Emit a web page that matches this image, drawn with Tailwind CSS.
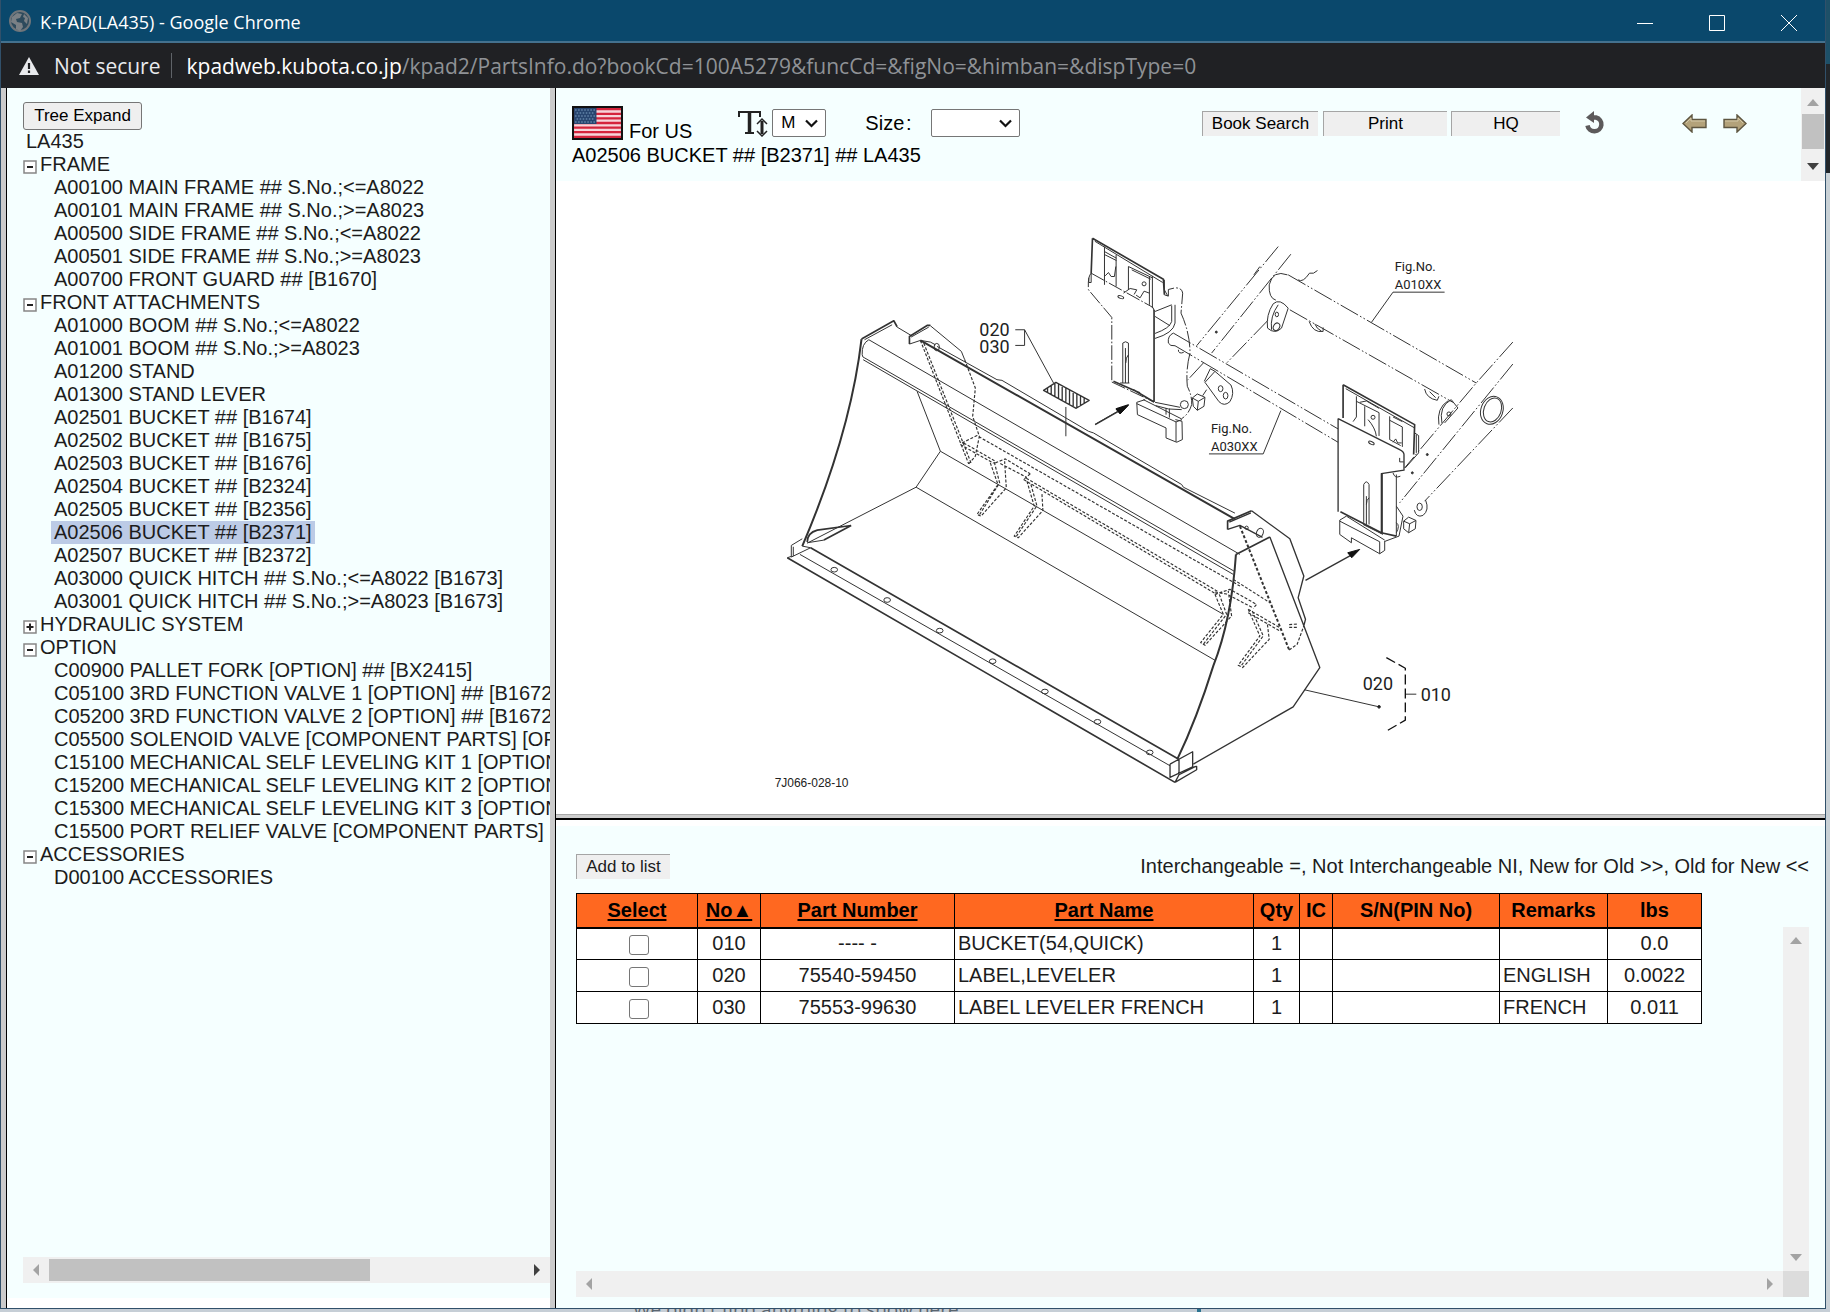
<!DOCTYPE html>
<html lang="en">
<head>
<meta charset="utf-8">
<title>K-PAD(LA435)</title>
<script src="https://cdn.jsdelivr.net/npm/@tailwindcss/browser@4"></script>
</head>
<body class="h-screen overflow-hidden bg-[#c6ced6] flex flex-col font-['Liberation_Sans',Arial,sans-serif] text-[20px] leading-[23px] text-[#1c1c1c]">
<div class="flex-1 min-h-0 flex">
<div class="flex-1 min-w-0 flex flex-col border-l border-r border-b border-[#31506a]">

  <header class="h-[43px] shrink-0 flex items-center bg-[#0a486c] border-b-2 border-[#44718e] text-white font-['Open_Sans',sans-serif]">
    <svg class="ml-[7px] size-6" viewBox="0 0 24 24"><circle cx="12" cy="12" r="10" fill="#2d4a5c" stroke="#6f757a" stroke-width="2"/><path d="M4 8l5-4 5 1-2 4-4 1 1 3 5 1 1 4-3 4-4-2 0-4-5-3zM16 5l4 4-1 6-3-3 1-3-2-1z" fill="#7a8085"/></svg>
    <h1 class="ml-[8px] mt-[2px] text-[18px] leading-6">K-PAD(LA435) - Google Chrome</h1>
    <div class="ml-auto mt-1 flex">
      <button class="w-[72px] h-10 flex items-center justify-center" aria-label="Minimize"><svg class="size-4" viewBox="0 0 16 16" stroke="#fff" fill="none"><path d="M0 8.500h16"/></svg></button>
      <button class="w-[72px] h-10 flex items-center justify-center" aria-label="Maximize"><svg class="size-4" viewBox="0 0 16 16" stroke="#fff" fill="none"><path d="M.5.500h15v15H.5z"/></svg></button>
      <button class="w-[72px] h-10 flex items-center justify-center" aria-label="Close"><svg class="size-4" viewBox="0 0 16 16" stroke="#fff" fill="none"><path d="M0 0l16 16M16 0L0 16"/></svg></button>
    </div>
  </header>

  <div class="h-[45px] shrink-0 flex items-center bg-[#202124] text-[#e8eaed] font-['Open_Sans',sans-serif] text-[21px] leading-7">
    <svg class="ml-[18px] w-5 h-[18px]" viewBox="0 0 20 18"><path d="M10 0L20 18H0z" fill="#e8eaed"/><path d="M10 6v6M10 13.500v2.500" stroke="#202124" stroke-width="2.200"/></svg>
    <span class="ml-[15px]">Not secure</span>
    <span class="ml-[10px] w-px h-[25px] bg-[#5f6368]"></span>
    <span class="ml-[15px] whitespace-nowrap text-[#8f9296]"><span class="text-white">kpadweb.kubota.co.jp</span>/kpad2/PartsInfo.do?bookCd=100A5279&amp;funcCd=&amp;figNo=&amp;himban=&amp;dispType=0</span>
  </div>

  <div class="flex-1 min-h-0 flex">
    <nav class="w-[554px] shrink-0 flex flex-col bg-[#f5ffff] border-l-[5px] border-r-[5px] border-[#cbcbcb] overflow-hidden">
      <div class="flex-1 min-h-0 border-l border-black pl-4 pt-[14px] overflow-hidden whitespace-nowrap">
        <button class="block w-[119px] h-7 bg-[#efefef] border border-[#767676] rounded-[3px] text-[17px] leading-5 text-black">Tree Expand</button>
        <div class="pl-[3px]">LA435</div>
        <ul>
          <li><div class="flex items-center gap-[3px]"><svg class="size-[14px] mt-1" viewBox="0 0 14 14" fill="none"><path d="M1 1h12v12H1z" fill="#fff" stroke="#868686" stroke-width="1.500"/><path d="M4 7h6" stroke="#222" stroke-width="2"/></svg>FRAME</div>
            <ul class="pl-[31px]"><li>A00100 MAIN FRAME ## S.No.;&lt;=A8022</li><li>A00101 MAIN FRAME ## S.No.;&gt;=A8023</li><li>A00500 SIDE FRAME ## S.No.;&lt;=A8022</li><li>A00501 SIDE FRAME ## S.No.;&gt;=A8023</li><li>A00700 FRONT GUARD ## [B1670]</li></ul></li>
          <li><div class="flex items-center gap-[3px]"><svg class="size-[14px] mt-1" viewBox="0 0 14 14" fill="none"><path d="M1 1h12v12H1z" fill="#fff" stroke="#868686" stroke-width="1.500"/><path d="M4 7h6" stroke="#222" stroke-width="2"/></svg>FRONT ATTACHMENTS</div>
            <ul class="pl-[31px]"><li>A01000 BOOM ## S.No.;&lt;=A8022</li><li>A01001 BOOM ## S.No.;&gt;=A8023</li><li>A01200 STAND</li><li>A01300 STAND LEVER</li><li>A02501 BUCKET ## [B1674]</li><li>A02502 BUCKET ## [B1675]</li><li>A02503 BUCKET ## [B1676]</li><li>A02504 BUCKET ## [B2324]</li><li>A02505 BUCKET ## [B2356]</li><li><span class="inline-block h-[23px] align-top -mx-[3px] px-[3px] bg-[#bccbe6]">A02506 BUCKET ## [B2371]</span></li><li>A02507 BUCKET ## [B2372]</li><li>A03000 QUICK HITCH ## S.No.;&lt;=A8022 [B1673]</li><li>A03001 QUICK HITCH ## S.No.;&gt;=A8023 [B1673]</li></ul></li>
          <li><div class="flex items-center gap-[3px]"><svg class="size-[14px] mt-1" viewBox="0 0 14 14" fill="none"><path d="M1 1h12v12H1z" fill="#fff" stroke="#868686" stroke-width="1.500"/><path d="M3.500 7h7M7 3.500v7" stroke="#222" stroke-width="2"/></svg>HYDRAULIC SYSTEM</div></li>
          <li><div class="flex items-center gap-[3px]"><svg class="size-[14px] mt-1" viewBox="0 0 14 14" fill="none"><path d="M1 1h12v12H1z" fill="#fff" stroke="#868686" stroke-width="1.500"/><path d="M4 7h6" stroke="#222" stroke-width="2"/></svg>OPTION</div>
            <ul class="pl-[31px]"><li>C00900 PALLET FORK [OPTION] ## [BX2415]</li><li>C05100 3RD FUNCTION VALVE 1 [OPTION] ## [B1672]</li><li>C05200 3RD FUNCTION VALVE 2 [OPTION] ## [B1672]</li><li>C05500 SOLENOID VALVE [COMPONENT PARTS] [OPTION]</li><li>C15100 MECHANICAL SELF LEVELING KIT 1 [OPTION]</li><li>C15200 MECHANICAL SELF LEVELING KIT 2 [OPTION]</li><li>C15300 MECHANICAL SELF LEVELING KIT 3 [OPTION]</li><li>C15500 PORT RELIEF VALVE [COMPONENT PARTS]</li></ul></li>
          <li><div class="flex items-center gap-[3px]"><svg class="size-[14px] mt-1" viewBox="0 0 14 14" fill="none"><path d="M1 1h12v12H1z" fill="#fff" stroke="#868686" stroke-width="1.500"/><path d="M4 7h6" stroke="#222" stroke-width="2"/></svg>ACCESSORIES</div>
            <ul class="pl-[31px]"><li>D00100 ACCESSORIES</li></ul></li>
        </ul>
      </div>
      <div class="border-l border-black pl-4">
        <div class="h-[26px] bg-[#f0f0f0] flex items-center px-[10px]">
          <svg class="w-[6px] h-3" viewBox="0 0 6 12"><path d="M6 0v12L0 6z" fill="#a3a3a3"/></svg>
          <div class="ml-[10px] w-[321px] h-[22px] bg-[#c1c1c1]"></div>
          <svg class="ml-auto w-[6px] h-3" viewBox="0 0 6 12"><path d="M0 0v12l6-6z" fill="#404040"/></svg>
        </div>
        <div class="h-[15px]"></div>
      </div>
      <div class="h-[10px] bg-white border-l border-black"></div>
    </nav>

    <main class="flex-1 min-w-0 flex flex-col border-l border-black">
      <section class="h-[93px] shrink-0 flex bg-[#f5ffff]">
        <div class="flex-1 min-w-0 pl-4 pt-[18px]">
          <div class="flex items-center h-[34px]">
            <svg class="w-[51px] h-[34px] shrink-0" viewBox="0 0 50 34" preserveAspectRatio="none"><path d="M0 0h50v34H0z" fill="#111"/><path d="M2 2h46v30H2z" fill="#f6d5da"/><path d="M2 3.200h46M2 7.800h46M2 12.400h46M2 17h46M2 21.600h46M2 26.200h46M2 30.800h46" stroke="#d5243c" stroke-width="2.300"/><path d="M2 2h22v16H2z" fill="#27456f"/><path d="M3 4h20M4.500 7h18M3 10h20M4.500 13h18M3 16h20" stroke="#7fa3c4" stroke-width="1.200" stroke-dasharray="1.500 1.500"/></svg>
            <span class="ml-[6px] self-end leading-[17px] text-black">For US</span>
            <svg class="ml-[45px] w-[31px] h-[27px]" viewBox="0 0 31 27" fill="none" stroke="#222"><path d="M2 7V2h21v5" stroke-width="2"/><path d="M12.500 2v20" stroke-width="3.500"/><path d="M8 23h9" stroke-width="2"/><path d="M25 11v13" stroke-width="3"/><path d="M20 14l5-5 5 5M20 21l5 5 5-5" stroke-width="1.500"/></svg>
            <span class="relative ml-1 w-[54px] h-7"><select aria-label="Text size" class="appearance-none w-full h-full bg-white border border-[#767676] rounded-[2px] pl-2 text-[17px] leading-5 text-black"><option>M</option></select><svg class="absolute right-2 top-[10px] w-[13px] h-[9px] pointer-events-none" viewBox="0 0 13 9" fill="none" stroke="#111" stroke-width="2.200"><path d="M1 1.500l5.500 5.500L12 1.500"/></svg></span>
            <label for="size" class="ml-[39px] w-[66px] text-black">Size&hairsp;:</label>
            <span class="relative w-[89px] h-7"><select id="size" class="appearance-none w-full h-full bg-white border border-[#767676] rounded-[2px] text-[17px]"><option></option></select><svg class="absolute right-2 top-[10px] w-[13px] h-[9px] pointer-events-none" viewBox="0 0 13 9" fill="none" stroke="#111" stroke-width="2.200"><path d="M1 1.500l5.500 5.500L12 1.500"/></svg></span>
            <div class="ml-auto mr-[54px] flex items-center text-[17px] leading-5 text-black">
              <button class="w-[116px] h-[25px] bg-[#efefef] border-t border-l border-[#a5a5a5]">Book Search</button>
              <button class="ml-[5px] w-[124px] h-[25px] bg-[#efefef] border-t border-l border-[#a5a5a5]">Print</button>
              <button class="ml-1 w-[109px] h-[25px] bg-[#efefef] border-t border-l border-[#a5a5a5]">HQ</button>
              <button class="ml-[24px]" aria-label="Reload"><svg class="w-[23px] h-6" viewBox="0 0 23 24"><path d="M9 6.500h3a7 7 0 1 1-8.500 8" fill="none" stroke="#5c5a5b" stroke-width="4.500"/><path d="M10 0v12L2 6.500z" fill="#5c5a5b"/></svg></button>
              <button class="ml-[75px]" aria-label="Previous"><svg class="w-[25px] h-[19px]" viewBox="0 0 25 19"><path d="M1 9.500L10 1v4.500h14v8H10V18z" fill="#b3a27a" stroke="#5d5540" stroke-width="1.400"/><path d="M4 9l5-5v3h14" fill="none" stroke="#d3c8a8"/></svg></button>
              <button class="ml-4" aria-label="Next"><svg class="w-6 h-[19px]" viewBox="0 0 24 19"><path d="M23 9.500L14 1v4.500H1v8h13V18z" fill="#b3a27a" stroke="#5d5540" stroke-width="1.400"/><path d="M2 7h13V4l5 5" fill="none" stroke="#d3c8a8"/></svg></button>
            </div>
          </div>
          <h2 class="mt-[4px] text-black">A02506 BUCKET ## [B2371] ## LA435</h2>
        </div>
        <div class="w-6 bg-[#f0f0f0] flex flex-col items-center py-[11px]">
          <svg class="w-3 h-[7px]" viewBox="0 0 12 7"><path d="M0 7h12L6 0z" fill="#a3a3a3"/></svg>
          <div class="mt-2 w-[22px] h-[35px] bg-[#c1c1c1]"></div>
          <svg class="mt-auto w-3 h-[7px]" viewBox="0 0 12 7"><path d="M0 0h12L6 7z" fill="#404040"/></svg>
        </div>
      </section>

      <section class="flex-1 min-h-0 bg-white">
        <svg class="w-full h-full" viewBox="556 181 1269 634" fill="none" stroke="#333" stroke-width="3" stroke-linejoin="round" role="img" aria-label="Bucket, exploded view">
          <!-- loader frame, mounting plates and booms -->
          <g transform="translate(1060 220) scale(.33333)">
            <g stroke-width="5"><path d="M97 55L310 178l3 47M97 55l-4 105M282 270v277M842 877l123 63 45 10M850 495l215 120-3 90M850 495v100M160 485l80 35M220 510l62 37"/></g>
            <path d="M104 64L308 188M133 80v115M133 95l36 20M133 104l36 18M168 105v95M135 168l10-10 8 12h10l4-30M205 140v70M205 140l72 34M215 150l57 28M268 170v85M277 168v97M190 220l20-14 20 4-8 14M228 226l12 8 12-20 16 6"/>
            <circle cx="252" cy="192" r="6"/><ellipse cx="182" cy="232" rx="9" ry="4" transform="rotate(20 182 232)"/>
            <path d="M93 160Q82 170 85 210L155 293V487M155 487l127 60M93 160l177 98q12 4 12 14" stroke-dasharray="44 6 5 6"/>
            <path d="M93 160v28h-7v-14M188 370v120M205 370v120M188 370q8-8 17 0M196 385v105M205 405q-8 8-8 25M180 490h28"/>
            <path d="M313 225l12 4v-20l20-5q22 0 23 16l-5 60q27 60 27 120-13 50-8 100 15 30 13 55-8 28-30 42" stroke-dasharray="50 6 5 6"/>
            <path d="M345 255v55q-5 30-60 46M335 257v48q-5 20-50 36M285 290l45 28M285 275l50-20M313 180v30l10 18"/>
            <path d="M285 548l75 15M365 570q-40 2-78-12"/><circle cx="373" cy="555" r="12"/>
            <path d="M230 548l2 37 86 40v30l32 13 17-8-1-55-20-5M230 548l25-8M230 552l118 55 18-7M348 607v60M250 540l115 58M318 565v20M328 567v27"/>
            <path d="M397 535l15-12 23 10-3 27-20 12-12-12zM397 535l18 10 20-12M415 545l-3 27M440 510l-12 18"/>
            <path d="M465 455l-30 33 42 58q16 16 33 0 15-25 3-50l-48-41-14-8-18 38"/><ellipse cx="482" cy="507" rx="7" ry="9"/><ellipse cx="497" cy="528" rx="7" ry="10"/>
            <g stroke-dasharray="60 7 5 7 5 7">
              <path d="M340 340l495 288M345 378l490 290M655 80L410 378M693 103L455 400M623 303L500 430M430 430l-48 52M685 165l565 325M690 270l490 278M1360 367l-110 123-215 255M1360 433l-340 417M1360 565l-265 280"/>
            </g>
            <path d="M340 340q-18 8-15 30 5 10 20 8M355 390q0 14 16 8M683 165q-44-16-55 30-2 40 20 46M600 140l-18 25M715 180q14 10 34-20h12l12-8"/>
            <path d="M1155 217h-155l-65 91M447 703h163l53-130"/>
            <path d="M640 252q20-18 45 13l-20 60q-20 20-42 0-5-40 17-73M635 330q-5-40 20-75"/><ellipse cx="651" cy="284" rx="5" ry="7"/><ellipse cx="650" cy="321" rx="9" ry="12" transform="rotate(30 650 321)"/>
            <path d="M748 305q12 35 42 30v-12M765 312q5 15 20 22M1095 508q5 28 38 34l5-12M1110 516l18 18"/>
            <path d="M1147 610q-10-50 28-70l20 25-40 45M1138 615q-8-50 28-72"/><circle cx="1168" cy="583" r="6"/>
            <ellipse cx="1297" cy="572" rx="33" ry="43" transform="rotate(20 1297 572)"/><ellipse cx="1299" cy="571" rx="26" ry="37" transform="rotate(20 1299 571)"/>
            <g fill="#333"><circle cx="469" cy="337" r="3"/><circle cx="1103" cy="705" r="3"/><circle cx="1058" cy="760" r="3"/></g>
            <path d="M858 507l207 118M890 530v62l-10 14M890 545l68 34v70M900 548l20-4 38 22M915 560v60M925 600q22 25 25 50M990 590v70l33 18M990 602l38 20v60M1000 592l28 14M1065 640l12 8v52l-40 45M1070 645v55M1000 668l8-10 6 12h12"/>
            <circle cx="940" cy="593" r="6"/><ellipse cx="935" cy="670" rx="9" ry="4" transform="rotate(25 935 670)"/>
            <path d="M835 597v280M835 597l185 93q13 6 13 15v47l-68 10v180" stroke-width="4"/>
            <path d="M1020 715v12h12M912 910V795q8-16 16 0v120M920 830v85M928 835q-8 6-8 20M968 762v180M1010 765v185M1000 760q5 18 22 10M1010 860l20 30-12 60-43 16M1010 910q12 8 0 30"/>
            <path d="M840 902v43l35 25v-15l85 48 15-10v-28M840 902l20-12M840 905l120 62v36M860 890l115 72M910 915l60 30"/>
            <path d="M1032 905l15-12 22 10-2 25-20 12-15-12zM1032 905l18 8 19-10M1050 913l-3 27M1098 842q12 30-8 46-20 8-26-16"/><ellipse cx="1080" cy="862" rx="8" ry="11"/>
            <path d="M105 614l75-43"/><path d="M205 557l-37 12 12 14z" fill="#111" stroke="#111"/>
          </g>
          <!-- bucket: left side, back and cutting edge -->
          <g transform="translate(760 300) scale(.33333)">
            <g stroke-width="6"><path d="M303 118Q270 400 125 740M480 122l945 537"/></g>
            <g stroke-width="5"><path d="M303 118l97-55 10 18M447 133v-23l53-33h10M150 745l1105 635M80 775l1165 675M140 728q0-28 30-36l102-14M272 678l-82 44"/></g>
            <path d="M312 120l83-45M410 82l42 25M325 120l1115 645M325 120q-22 12-20 45 0 8 8 10l1109 640M308 180l1112 645M530 140l180 100 15 2 260 153 15 5 265 155 5 8 155 78M510 78l93 77 10 25M447 133l33-11M452 112l53-30M480 122l30 5 15 8M470 275l70 180-73 108-327 168M540 455l850 490M467 563l898 520M118 765l1112 635M190 722l-50 8M125 740l25 5"/>
            <path d="M92 738v35l58-28M92 738l33-20M80 775l12-4M98 742v28"/><ellipse cx="529" cy="142" rx="8" ry="11"/>
            <g stroke-width="3.500" stroke-dasharray="9 5"><path d="M613 180l32 85-8 85 20 60-12 60-20 23M480 122l145 371M490 130l142 360M605 430l45-22 790 452M600 435l100 56M610 430l95 55M705 490l30-12 75 45M720 492l80 42M810 523l-20 17M790 540l580 345M798 536l575 340M690 490l23 65-63 90 12 5 76-85-5-80M702 488l16 62-60 95M800 545l22 75-60 90 12 5 74-82-3-52M812 555l18 64-62 92"/></g>
            <g><ellipse cx="221" cy="811" rx="10" ry="7"/><ellipse cx="380" cy="902" rx="10" ry="7"/><ellipse cx="538" cy="994" rx="10" ry="7"/><ellipse cx="697" cy="1086" rx="10" ry="7"/><ellipse cx="854" cy="1177" rx="10" ry="7"/><ellipse cx="1012" cy="1268" rx="10" ry="7"/><ellipse cx="1169" cy="1360" rx="10" ry="7"/></g>
            <path d="M1230 1395l68-37v47l12-3v10l-65 38M1230 1395v40l68-32M1257 1382v45l50-25M1257 1427l-12 23" stroke-width="4"/>
            <path d="M765 90h28v47h-28M793 90l87 160M917 322v88"/>
            <path d="M850 272l37-24 100 54-39 24zM862 265v12M873 258v26M884 251v39M895 253v43M906 258v43M917 264v42M928 270v43M939 276v43M950 282v43M961 288v30M972 294v17" stroke-width="4"/>
            <path d="M1005 375l75-43" stroke-width="4"/><path d="M1105 315l-37 12 12 14z" fill="#111" stroke="#111"/>
          </g>
          <!-- bucket: right side -->
          <g transform="translate(1160 480) scale(.33333)">
            <path d="M228 225Q215 420 160 560 110 720 52 840" stroke-width="6"/>
            <path d="M228 225l102-52M203 150v-25l72-31" stroke-width="5"/>
            <path d="M330 173l150 392-80 118-300 172M203 150l37-12 68 36M275 94l115 84 42 112-17 65 22 65-5 20M208 128l65-28" stroke-width="4"/>
            <ellipse cx="300" cy="160" rx="10" ry="14" transform="rotate(20 300 160)"/><circle cx="260" cy="145" r="5"/>
            <path d="M240 140l148 372" stroke-width="6" stroke-dasharray="9 6"/>
            <path d="M388 512l24-17 20-55M220 300l110 70M165 345l45-15 80 45-10 12M165 338l35 6 80 42M165 345l25 60-68 85 13 8 80-88-10-75M178 345l22 60-70 90M265 390l35 80-65 88 13 7 80-85-6-50M277 395l33 75-68 92M265 390l95 55M265 400l95 55M388 444h25M388 436l27-2" stroke-width="3.500" stroke-dasharray="9 5"/>
            <path d="M437 303l143-79" stroke-width="4"/><path d="M600 210l-36 10 12 15z" fill="#111" stroke="#111"/>
            <path d="M435 632l223 51M737 645h33"/><circle cx="658" cy="683" r="4" fill="#111"/>
            <path d="M680 535l57 32v156l-55 32" stroke="#111" stroke-width="4" stroke-dasharray="30 12"/>
          </g>
          <g fill="#222" stroke="none" class="font-['Roboto',sans-serif] text-[13px]">
            <text x="1395" y="271">Fig.No.</text><text x="1395" y="289">A010XX</text>
            <text x="1211" y="433">Fig.No.</text><text x="1211" y="451">A030XX</text>
            <g class="font-['Liberation_Sans',sans-serif] text-[12px]"><text x="774" y="788">7J066-028-10</text></g>
            <g class="font-['Roboto',sans-serif] text-[18px]"><text x="979" y="336">020</text><text x="979" y="353">030</text><text x="1363" y="691">020</text><text x="1421" y="702">010</text></g>
          </g>
        </svg>
      </section>

      <div class="h-[6px] shrink-0 bg-[#cdcdcd] border-t border-t-[#a8a8a8] border-b-2 border-b-black"></div>

      <section class="h-[488px] shrink-0 flex flex-col bg-[#f5ffff] border-t-[6px] border-white pl-5 pr-4 pt-[28px] pb-[11px]">
        <div class="flex items-center justify-between h-[25px]">
          <button class="w-[94px] h-[25px] bg-[#efefef] border-t border-l border-[#a5a5a5] text-[17px] leading-5">Add to list</button>
          <p>Interchangeable =, Not Interchangeable NI, New for Old &gt;&gt;, Old for New &lt;&lt;</p>
        </div>
        <div class="mt-[14px] flex-1 min-h-0 flex justify-between">
          <table class="table-fixed w-[1125px] self-start border-collapse bg-white text-center [&_td]:border [&_th]:border [&_td]:border-black [&_th]:border-black [&_td]:h-8 [&_td]:p-0 [&_th]:p-0">
            <colgroup><col class="w-[121px]"><col class="w-[63px]"><col class="w-[194px]"><col class="w-[299px]"><col class="w-[46px]"><col class="w-[33px]"><col class="w-[167px]"><col class="w-[108px]"><col class="w-[94px]"></colgroup>
            <thead class="bg-[#ff6820] text-black border-b-2 border-black"><tr class="h-[34px]">
              <th><a href="#" class="underline decoration-2 underline-offset-2">Select</a></th><th><a href="#" class="underline decoration-2 underline-offset-2">No▲</a></th><th><a href="#" class="underline decoration-2 underline-offset-2">Part Number</a></th><th><a href="#" class="underline decoration-2 underline-offset-2">Part Name</a></th><th>Qty</th><th>IC</th><th>S/N(PIN No)</th><th>Remarks</th><th>lbs</th></tr></thead>
            <tbody>
              <tr><td><input type="checkbox" aria-label="Select 010" class="inline-block ml-[3px] align-middle appearance-none size-5 border border-[#767676] rounded-[3px] bg-white"></td><td>010</td><td>---- -</td><td class="text-left"><span class="pl-[3px]">BUCKET(54,QUICK)</span></td><td>1</td><td></td><td></td><td></td><td>0.0</td></tr>
              <tr><td><input type="checkbox" aria-label="Select 020" class="inline-block ml-[3px] align-middle appearance-none size-5 border border-[#767676] rounded-[3px] bg-white"></td><td>020</td><td>75540-59450</td><td class="text-left"><span class="pl-[3px]">LABEL,LEVELER</span></td><td>1</td><td></td><td></td><td class="text-left"><span class="pl-[3px]">ENGLISH</span></td><td>0.0022</td></tr>
              <tr><td><input type="checkbox" aria-label="Select 030" class="inline-block ml-[3px] align-middle appearance-none size-5 border border-[#767676] rounded-[3px] bg-white"></td><td>030</td><td>75553-99630</td><td class="text-left"><span class="pl-[3px]">LABEL LEVELER FRENCH</span></td><td>1</td><td></td><td></td><td class="text-left"><span class="pl-[3px]">FRENCH</span></td><td>0.011</td></tr>
            </tbody>
          </table>
          <div class="mt-[34px] w-[26px] bg-[#f0f0f0] flex flex-col items-center justify-between py-[10px]">
            <svg class="w-3 h-[7px]" viewBox="0 0 12 7"><path d="M0 7h12L6 0z" fill="#a3a3a3"/></svg>
            <svg class="w-3 h-[7px]" viewBox="0 0 12 7"><path d="M0 0h12L6 7z" fill="#a3a3a3"/></svg>
          </div>
        </div>
        <div class="h-[26px] flex">
          <div class="flex-1 bg-[#f0f0f0] flex items-center justify-between px-[10px]">
            <svg class="w-[6px] h-3" viewBox="0 0 6 12"><path d="M6 0v12L0 6z" fill="#a3a3a3"/></svg>
            <svg class="w-[6px] h-3" viewBox="0 0 6 12"><path d="M0 0v12l6-6z" fill="#a3a3a3"/></svg>
          </div>
          <div class="w-[26px] bg-[#dcdcdc]"></div>
        </div>
      </section>
    </main>
  </div>
</div>
<!-- sliver of the window behind -->
<div class="w-1 shrink-0 flex flex-col"><div class="h-[64px] bg-[#1d5068]"></div><div class="h-[109px] bg-[#22262a]"></div><div class="flex-1 bg-[#c9d1d6]"></div></div>
</div>
<div class="h-[3px] shrink-0 overflow-hidden flex text-[#5b6670]">
  <span class="ml-[633px] -mt-[10px] text-[19px] leading-[20px] whitespace-nowrap font-['Open_Sans',sans-serif]">We didn't find anything to show here</span>
  <span class="ml-auto mr-[629px] w-1 bg-[#2a7390]"></span>
</div>
</body>
</html>
